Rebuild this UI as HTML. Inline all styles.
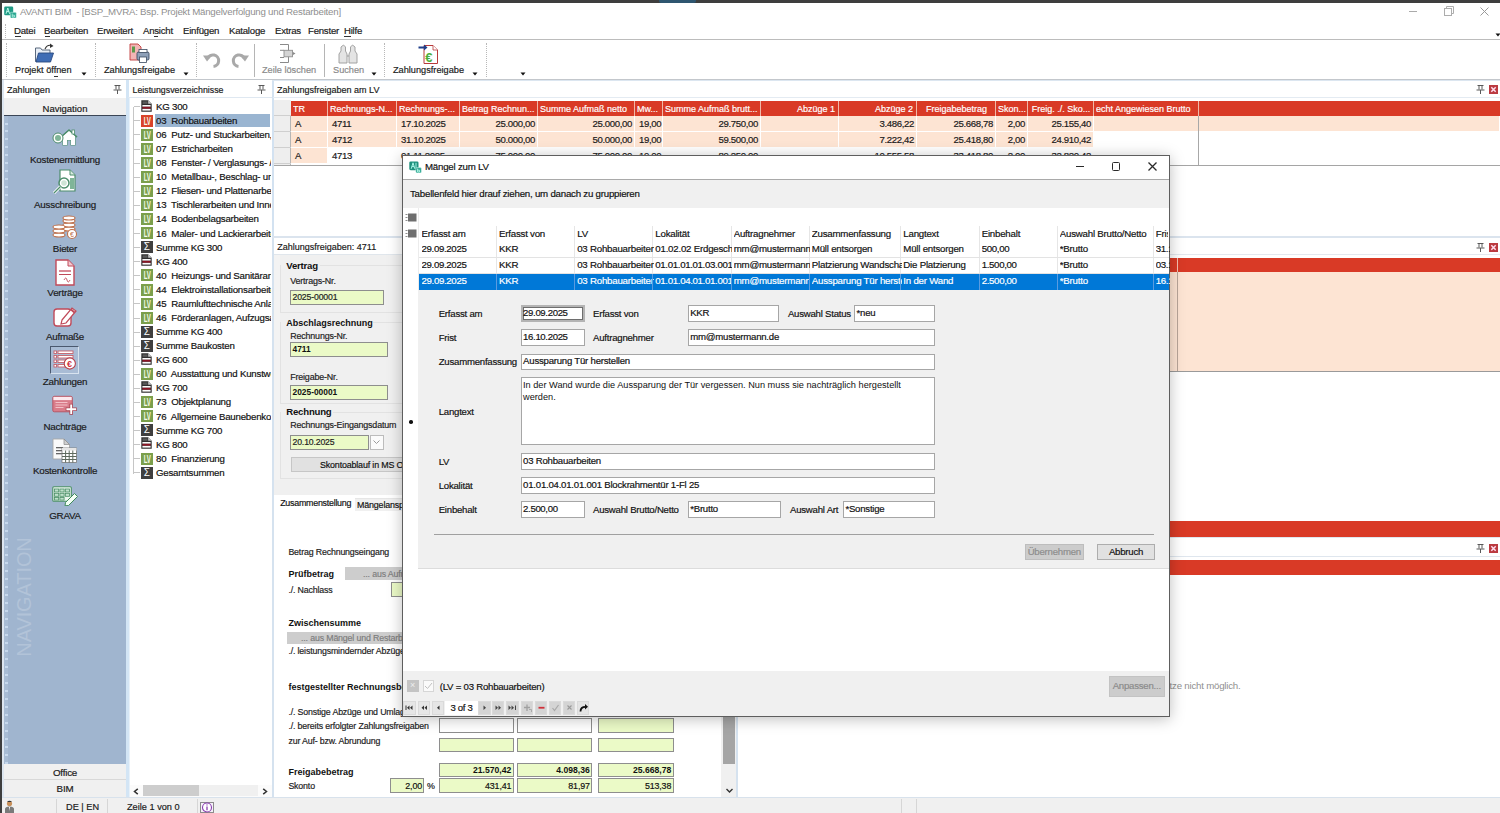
<!DOCTYPE html>
<html><head><meta charset="utf-8">
<style>
*{box-sizing:border-box;margin:0;padding:0}
html,body{width:1500px;height:813px;overflow:hidden;background:#fff}
body{position:relative;font-family:"Liberation Sans",sans-serif;font-size:9.2px;color:#1a1a1a}
.a{position:absolute}
.t{position:absolute;white-space:nowrap;line-height:12px;height:12px;-webkit-text-stroke-width:0.18px}
.n{letter-spacing:-0.35px}
.b{font-weight:bold;-webkit-text-stroke-width:0}
.hl{position:absolute;height:1px}
.vl{position:absolute;width:1px}
</style></head><body>
<!-- window frame -->
<div class="a" style="left:0;top:0;width:1500px;height:2.8px;background:#3e3e3e"></div>
<div class="a" style="left:0;top:0;width:1.9px;height:813px;background:#3e3e3e"></div>

<div class="a" style="left:659px;top:0;width:37px;height:3.3px;background:#2e5670;border-radius:0 0 2px 2px"></div>
<!-- title bar -->
<svg class="a" style="left:4px;top:5.5px" width="13" height="12.5" viewBox="0 0 13 12.5"><rect x="0.2" y="0.4" width="9" height="8.8" rx="1.3" fill="#1f9a85"/><rect x="6.3" y="6.3" width="6" height="5.8" rx="1" fill="#2aa58f" stroke="#e6fbf6" stroke-width="0.5"/><path d="M2 7.8 L3.8 2 L5.6 7.8 M2.7 5.6 H4.9" stroke="#c8fff2" stroke-width="0.9" fill="none"/><path d="M8.2 7.5 V11 H10.4 V9.2 H8.2" stroke="#c8fff2" stroke-width="0.7" fill="none"/></svg>
<div class="t" style="left:20px;top:6px;color:#8f8f8f;font-size:9.7px;-webkit-text-stroke-width:0;letter-spacing:-0.22px">AVANTI BIM&nbsp; - [BSP_MVRA: Bsp. Projekt Mängelverfolgung und Restarbeiten]</div>
<div class="a" style="left:1409px;top:11px;width:8px;height:1px;background:#aaa"></div>
<svg class="a" style="left:1443.5px;top:6px" width="10" height="10" viewBox="0 0 10 10"><rect x="0.5" y="2.5" width="7" height="7" fill="#fff" stroke="#adadad" stroke-width="1"/><path d="M2.5 2.5 V0.5 H9.5 V7.5 H7.5" fill="none" stroke="#adadad" stroke-width="1"/></svg>
<svg class="a" style="left:1479.5px;top:6.5px" width="9" height="9" viewBox="0 0 9 9"><path d="M0.5 0.5 L8.5 8.5 M8.5 0.5 L0.5 8.5" stroke="#999" stroke-width="1"/></svg>

<!-- menu -->
<div class="t" style="left:14px;top:25px;font-size:9.6px;letter-spacing:-0.22px">Datei</div>
<div class="t" style="left:44px;top:25px;font-size:9.6px;letter-spacing:-0.22px">Bearbeiten</div>
<div class="t" style="left:97px;top:25px;font-size:9.6px;letter-spacing:-0.22px">Erweitert</div>
<div class="t" style="left:143px;top:25px;font-size:9.6px;letter-spacing:-0.22px">Ansicht</div>
<div class="t" style="left:183px;top:25px;font-size:9.6px;letter-spacing:-0.22px">Einfügen</div>
<div class="t" style="left:229px;top:25px;font-size:9.6px;letter-spacing:-0.22px">Kataloge</div>
<div class="t" style="left:275px;top:25px;font-size:9.6px;letter-spacing:-0.22px">Extras</div>
<div class="t" style="left:308px;top:25px;font-size:9.6px;letter-spacing:-0.22px">Fenster</div>
<div class="t" style="left:344px;top:25px;font-size:9.6px;letter-spacing:-0.22px">Hilfe</div>
<div class="a" style="left:14.5px;top:36px;width:6.0px;height:0.8px;background:#333"></div><div class="a" style="left:44.5px;top:36px;width:5.8px;height:0.8px;background:#333"></div><div class="a" style="left:154.4px;top:35.6px;width:4px;height:0.8px;background:#333"></div><div class="a" style="left:344px;top:36px;width:6.5px;height:0.8px;background:#333"></div><div class="a" style="left:54px;top:75.5px;width:3.5px;height:0.8px;background:#333"></div>
<div class="hl" style="left:2px;top:39px;width:1498px;background:#bcbcbc"></div>

<!-- toolbar -->
<div class="t" style="left:15px;top:64px">Projekt öffnen</div>
<div class="t" style="left:104px;top:64px">Zahlungsfreigabe</div>
<div class="t" style="left:262px;top:64px;color:#8a8a8a">Zeile löschen</div>
<div class="t" style="left:333px;top:64px;color:#8a8a8a">Suchen</div>
<div class="t" style="left:393px;top:64px">Zahlungsfreigabe</div>
<div class="hl" style="left:2px;top:79px;width:1498px;background:#c3c7cc"></div>


<!-- ===== LEFT NAV ===== -->
<div class="a" style="left:2px;top:80px;width:2px;height:717px;background:#dde6f0"></div>
<div class="t" style="left:7px;top:84px;font-size:9.1px">Zahlungen</div>
<svg class="a" style="left:113px;top:84px" width="10" height="11" viewBox="0 0 10 11"><path d="M1.5 1.5H7.5M3 1.5V5.5M6 1.5V5.5M0.5 6H8.5M4.5 6V10" stroke="#5a5a5a" stroke-width="1" fill="none"/></svg>
<div class="a" style="left:4px;top:98px;width:122px;height:17px;background:#f0f0f0"></div>
<div class="t" style="left:4px;top:102.8px;width:122px;text-align:center;font-size:9.5px">Navigation</div>
<div class="a" style="left:4px;top:115px;width:122px;height:1.5px;background:#3b4656"></div>
<div class="a" style="left:4px;top:116px;width:122px;height:648px;background:#a0b5cf"></div>
<div class="a" style="left:4px;top:116px;width:4px;height:648px;background:#a8bcd4"></div><div class="a" style="left:4.5px;top:117px;width:3px;height:647px;background:repeating-linear-gradient(#a8bcd4 0 5.5px,#c6d8ec 5.5px 7.5px,#a8bcd4 7.5px 8px)"></div>
<div class="t" style="left:-36.2px;top:587px;font-size:20px;line-height:20px;height:20px;color:#b2c3d8;transform:rotate(-90deg);letter-spacing:-0.1px;-webkit-text-stroke-width:0">NAVIGATION</div>
<div class="t" style="left:4px;top:154.0px;width:122px;text-align:center;font-size:9.8px;letter-spacing:-0.22px">Kostenermittlung</div>
<div class="t" style="left:4px;top:198.5px;width:122px;text-align:center;font-size:9.8px;letter-spacing:-0.22px">Ausschreibung</div>
<div class="t" style="left:4px;top:242.5px;width:122px;text-align:center;font-size:9.8px;letter-spacing:-0.22px">Bieter</div>
<div class="t" style="left:4px;top:286.5px;width:122px;text-align:center;font-size:9.8px;letter-spacing:-0.22px">Verträge</div>
<div class="t" style="left:4px;top:331.0px;width:122px;text-align:center;font-size:9.8px;letter-spacing:-0.22px">Aufmaße</div>
<div class="t" style="left:4px;top:376.0px;width:122px;text-align:center;font-size:9.8px;letter-spacing:-0.22px">Zahlungen</div>
<div class="t" style="left:4px;top:420.5px;width:122px;text-align:center;font-size:9.8px;letter-spacing:-0.22px">Nachträge</div>
<div class="t" style="left:4px;top:464.5px;width:122px;text-align:center;font-size:9.8px;letter-spacing:-0.22px">Kostenkontrolle</div>
<div class="t" style="left:4px;top:509.5px;width:122px;text-align:center;font-size:9.8px;letter-spacing:-0.22px">GRAVA</div>

<svg class="a" style="left:52px;top:128px" width="26" height="18" viewBox="0 0 26 18">
 <path d="M9 9 L17 2 L25 9 M11 8 V17 H15 V12 H19 V17 H23 V8" fill="#fff" stroke="#5a9a78" stroke-width="1.2"/>
 <path d="M11 8 L17 3 L23 8 V17 H19 V12 H15 V17 H11Z" fill="#fff"/>
 <path d="M9 9 L17 2 L25 9" fill="none" stroke="#4d8d6c" stroke-width="1.3"/>
 <rect x="20" y="2" width="2.5" height="4" fill="#fff" stroke="#4d8d6c" stroke-width="0.8"/>
 <circle cx="6" cy="10" r="5" fill="#fff" stroke="#4d8d6c" stroke-width="1"/>
 <circle cx="6" cy="10" r="3" fill="#7fb598"/>
</svg>
<svg class="a" style="left:52px;top:169px" width="26" height="26" viewBox="0 0 26 26">
 <path d="M8 1 H18 L23 6 V22 H8 Z" fill="#fff" stroke="#4d8d6c" stroke-width="1.2"/>
 <path d="M18 1 V6 H23" fill="#d8eadf" stroke="#4d8d6c" stroke-width="1"/>
 <rect x="18" y="9" width="4" height="11" fill="#7fb598"/>
 <circle cx="12" cy="14" r="5" fill="#fff" stroke="#4d8d6c" stroke-width="1.5"/>
 <circle cx="12" cy="14" r="2.8" fill="#cfe4d6"/>
 <path d="M8.5 17.5 L2 24" stroke="#fff" stroke-width="3"/>
 <path d="M8.5 17.5 L2 24" stroke="#4d8d6c" stroke-width="1.2"/>
</svg>
<svg class="a" style="left:51px;top:215px" width="28" height="25" viewBox="0 0 28 25">
 <g fill="#fff" stroke="#c0704a" stroke-width="1.1">
 <ellipse cx="18" cy="14" rx="6" ry="2"/><ellipse cx="18" cy="10" rx="6" ry="2"/><ellipse cx="18" cy="6" rx="6" ry="2"/><ellipse cx="18" cy="3" rx="6" ry="2"/>
 <ellipse cx="8" cy="20" rx="6" ry="2"/><ellipse cx="8" cy="16" rx="6" ry="2"/><ellipse cx="8" cy="12" rx="6" ry="2"/>
 <circle cx="21" cy="19" r="4.5"/>
 </g>
 <text x="19" y="22" font-size="7" fill="#c0704a" font-family="Liberation Sans">€</text>
</svg>
<svg class="a" style="left:54px;top:259px" width="22" height="28" viewBox="0 0 22 28">
 <path d="M2 1 H14 L20 7 V26 H2 Z" fill="#fff" stroke="#c04a5a" stroke-width="1.4"/>
 <path d="M14 1 V7 H20" fill="#f3c8cf" stroke="#c04a5a" stroke-width="1"/>
 <rect x="5" y="11" width="12" height="2" fill="#d98a96"/>
 <rect x="5" y="15" width="12" height="1" fill="#c04a5a"/>
 <path d="M10 21 q2 -4 3 0 t3 0" fill="none" stroke="#c04a5a" stroke-width="0.9"/>
</svg>
<svg class="a" style="left:52px;top:305px" width="26" height="24" viewBox="0 0 26 24">
 <rect x="2" y="4" width="17" height="17" rx="3" fill="#fff" stroke="#c04a5a" stroke-width="1.4"/>
 <path d="M10 15 L20 3 L24 6 L14 18 L9 19 Z" fill="#fff" stroke="#c04a5a" stroke-width="1.2"/>
 <path d="M19 4.5 L22.5 7.5" stroke="#c04a5a" stroke-width="2"/>
</svg>
<div class="a" style="left:50.2px;top:346.2px;width:28.5px;height:27.5px;border:1.5px solid #4a586e;border-right-color:#d8e3ef;border-bottom-color:#d8e3ef;background:#a9bcd5"></div>
<svg class="a" style="left:52px;top:348px" width="25" height="24" viewBox="0 0 25 24">
 <g fill="#fff" stroke="#c8606a" stroke-width="0.9">
 <rect x="2" y="3" width="2.5" height="2.5"/><rect x="2" y="7.5" width="2.5" height="2.5"/><rect x="2" y="12" width="2.5" height="2.5"/><rect x="2" y="16.5" width="2.5" height="2.5"/>
 <rect x="6" y="3" width="15" height="2.5"/><rect x="6" y="7.5" width="15" height="2.5"/><rect x="6" y="12" width="10" height="2.5"/><rect x="6" y="16.5" width="9" height="2.5"/>
 </g>
 <circle cx="17.8" cy="15.5" r="5.6" fill="#fff" stroke="#b8404c" stroke-width="1.1"/>
 <text x="15" y="18.8" font-size="9" font-weight="bold" fill="#d0303a" font-family="Liberation Sans">€</text>
</svg>
<svg class="a" style="left:51.8px;top:395px" width="27" height="22" viewBox="0 0 27 22">
 <rect x="0.8" y="1.3" width="19.5" height="15.5" rx="1.5" fill="#d97c8a" stroke="#b5505f" stroke-width="0.9"/>
 <rect x="1.4" y="1.9" width="18.3" height="3.2" fill="#fde9ee"/>
 <rect x="3.5" y="7" width="12" height="1" fill="#f3c0c8"/><rect x="3.5" y="9.5" width="12" height="1" fill="#f3c0c8"/><rect x="3.5" y="12" width="8" height="1" fill="#f3c0c8"/>
 <path d="M19.2 8.7 V19.8 M13.7 14.2 H24.8" stroke="#a84453" stroke-width="3.6"/>
 <path d="M19.2 9.4 V19.1 M14.4 14.2 H24.1" stroke="#fff" stroke-width="1.9"/>
</svg>
<svg class="a" style="left:52px;top:437.5px" width="26" height="25" viewBox="0 0 26 25">
 <path d="M1 1 H12 L17.5 6.5 V21 H1 Z" fill="#fafafa" stroke="#a8a8a8" stroke-width="0.9"/>
 <path d="M12 1 V6.5 H17.5Z" fill="#d0d0d0" stroke="#8a8a8a" stroke-width="0.7"/>
 <rect x="4" y="9" width="7" height="1.3" fill="#666"/><rect x="4" y="12" width="7" height="1.3" fill="#666"/><rect x="4" y="15" width="7" height="1.3" fill="#666"/>
 <rect x="10" y="10" width="14.5" height="14.5" fill="#fff" stroke="#7a7a7a" stroke-width="0.8"/>
 <rect x="10" y="10" width="14.5" height="2.5" fill="#e6e6e6"/>
 <path d="M13.6 12.5 V24.5 M17.2 12.5 V24.5 M20.8 12.5 V24.5 M10 15.5 H24.5 M10 18.5 H24.5 M10 21.5 H24.5" stroke="#5e6a5e" stroke-width="1"/>
</svg>
<svg class="a" style="left:52px;top:486px" width="27" height="20" viewBox="0 0 27 20">
 <rect x="0.8" y="0.8" width="18.5" height="14.5" rx="1" fill="#eaf6ee" stroke="#4b8f66" stroke-width="1.1"/>
 <g fill="#bfe0cb" stroke="#4b8f66" stroke-width="0.8"><rect x="2.5" y="3" width="4.2" height="3"/><rect x="7.9" y="3" width="4.2" height="3"/><rect x="13.3" y="3" width="4.2" height="3"/><rect x="2.5" y="7.3" width="4.2" height="3"/><rect x="7.9" y="7.3" width="4.2" height="3"/><rect x="13.3" y="7.3" width="4.2" height="3"/><rect x="2.5" y="11.5" width="4.2" height="2.6"/><rect x="7.9" y="11.5" width="4.2" height="2.6"/></g>
 <path d="M13.5 16.5 L22.5 7.5 L25.5 10.5 L16.5 19.5 L13 19.8Z" fill="#f4fff6" stroke="#3f8a5a" stroke-width="1"/>
</svg>

<div class="a" style="left:4px;top:764px;width:122px;height:16px;background:#f0f0f0;border-bottom:1px solid #d8d8d8"></div>
<div class="t" style="left:4px;top:767px;width:122px;text-align:center;font-size:9.8px;letter-spacing:-0.22px">Office</div>
<div class="a" style="left:4px;top:780px;width:122px;height:17px;background:#f0f0f0"></div>
<div class="t" style="left:4px;top:783px;width:122px;text-align:center;font-size:9.8px;letter-spacing:-0.22px">BIM</div>
<div class="a" style="left:126px;top:80px;width:3px;height:717px;background:#d3e5f5"></div>


<!-- ===== LV TREE ===== -->
<div class="t" style="left:132.5px;top:84px;font-size:8.8px">Leistungsverzeichnisse</div>
<svg class="a" style="left:257px;top:84px" width="10" height="11" viewBox="0 0 10 11"><path d="M1.5 1.5H7.5M3 1.5V5.5M6 1.5V5.5M0.5 6H8.5M4.5 6V10" stroke="#5a5a5a" stroke-width="1" fill="none"/></svg>
<div class="a" style="left:129px;top:97px;width:1px;height:700px;background:#e8f1f9"></div>
<div class="a" style="left:271.5px;top:81px;width:2.5px;height:716px;background:#d3e2f1"></div>
<div class="a" style="left:128px;top:97px;width:144px;height:1px;background:#dfe8f1"></div>
<div class="a" style="left:155px;top:114px;width:115px;height:13px;background:#9ab5d1"></div>
<div class="a" style="left:133px;top:106.5px;width:1px;height:367px;background:#c6c6c6"></div>
<div class="a" style="left:129.5px;top:98px;width:141px;height:686px;overflow:hidden">
<div class="a" style="left:4px;top:8.30px;width:6.5px;height:1px;background:#c6c6c6"></div><svg class="a" style="left:11.6px;top:1.50px" width="11" height="12" viewBox="0 0 11 12"><path d="M0.3 0.3 H7.2 L10.7 3.8 V11.7 H0.3Z" fill="#2f2f2f"/><path d="M7.2 0.3 L10.7 3.8 H7.2Z" fill="#c8c8c8"/><rect x="1.4" y="5" width="8.2" height="1.7" fill="#fafafa"/><rect x="1.4" y="6.8" width="8.2" height="1.9" fill="#8c1424"/><rect x="1.4" y="8.9" width="8.2" height="1.7" fill="#fafafa"/><rect x="1.6" y="1.4" width="5" height="2.4" fill="#5a5a5a"/></svg><div class="t" style="left:26.5px;top:2.80px;font-size:9.7px;color:#111;letter-spacing:-0.22px">KG 300</div>
<div class="a" style="left:4px;top:22.38px;width:6.5px;height:1px;background:#c6c6c6"></div><div class="a" style="left:11.5px;top:16.58px;width:11.5px;height:12px;background:#d9432a;color:#fff;font-size:11px;line-height:12.5px;text-align:center;font-weight:bold;color:#f4fbe8"><span style="display:inline-block;transform:scaleX(0.55);letter-spacing:-0.6px">LV</span></div><div class="t" style="left:26.5px;top:16.88px;font-size:9.7px;color:#111;letter-spacing:-0.22px">03&nbsp; Rohbauarbeiten</div>
<div class="a" style="left:4px;top:36.46px;width:6.5px;height:1px;background:#c6c6c6"></div><div class="a" style="left:11.5px;top:30.66px;width:11.5px;height:12px;background:#7b9f4b;color:#fff;font-size:11px;line-height:12.5px;text-align:center;font-weight:bold;color:#f4fbe8"><span style="display:inline-block;transform:scaleX(0.55);letter-spacing:-0.6px">LV</span></div><div class="t" style="left:26.5px;top:30.96px;font-size:9.7px;color:#111;letter-spacing:-0.22px">06&nbsp; Putz- und Stuckarbeiten,</div>
<div class="a" style="left:4px;top:50.54px;width:6.5px;height:1px;background:#c6c6c6"></div><div class="a" style="left:11.5px;top:44.74px;width:11.5px;height:12px;background:#7b9f4b;color:#fff;font-size:11px;line-height:12.5px;text-align:center;font-weight:bold;color:#f4fbe8"><span style="display:inline-block;transform:scaleX(0.55);letter-spacing:-0.6px">LV</span></div><div class="t" style="left:26.5px;top:45.04px;font-size:9.7px;color:#111;letter-spacing:-0.22px">07&nbsp; Estricharbeiten</div>
<div class="a" style="left:4px;top:64.62px;width:6.5px;height:1px;background:#c6c6c6"></div><div class="a" style="left:11.5px;top:58.82px;width:11.5px;height:12px;background:#7b9f4b;color:#fff;font-size:11px;line-height:12.5px;text-align:center;font-weight:bold;color:#f4fbe8"><span style="display:inline-block;transform:scaleX(0.55);letter-spacing:-0.6px">LV</span></div><div class="t" style="left:26.5px;top:59.12px;font-size:9.7px;color:#111;letter-spacing:-0.22px">08&nbsp; Fenster- / Verglasungs- /</div>
<div class="a" style="left:4px;top:78.70px;width:6.5px;height:1px;background:#c6c6c6"></div><div class="a" style="left:11.5px;top:72.90px;width:11.5px;height:12px;background:#7b9f4b;color:#fff;font-size:11px;line-height:12.5px;text-align:center;font-weight:bold;color:#f4fbe8"><span style="display:inline-block;transform:scaleX(0.55);letter-spacing:-0.6px">LV</span></div><div class="t" style="left:26.5px;top:73.20px;font-size:9.7px;color:#111;letter-spacing:-0.22px">10&nbsp; Metallbau-, Beschlag- und</div>
<div class="a" style="left:4px;top:92.78px;width:6.5px;height:1px;background:#c6c6c6"></div><div class="a" style="left:11.5px;top:86.98px;width:11.5px;height:12px;background:#7b9f4b;color:#fff;font-size:11px;line-height:12.5px;text-align:center;font-weight:bold;color:#f4fbe8"><span style="display:inline-block;transform:scaleX(0.55);letter-spacing:-0.6px">LV</span></div><div class="t" style="left:26.5px;top:87.28px;font-size:9.7px;color:#111;letter-spacing:-0.22px">12&nbsp; Fliesen- und Plattenarbeiten</div>
<div class="a" style="left:4px;top:106.86px;width:6.5px;height:1px;background:#c6c6c6"></div><div class="a" style="left:11.5px;top:101.06px;width:11.5px;height:12px;background:#7b9f4b;color:#fff;font-size:11px;line-height:12.5px;text-align:center;font-weight:bold;color:#f4fbe8"><span style="display:inline-block;transform:scaleX(0.55);letter-spacing:-0.6px">LV</span></div><div class="t" style="left:26.5px;top:101.36px;font-size:9.7px;color:#111;letter-spacing:-0.22px">13&nbsp; Tischlerarbeiten und Innen</div>
<div class="a" style="left:4px;top:120.94px;width:6.5px;height:1px;background:#c6c6c6"></div><div class="a" style="left:11.5px;top:115.14px;width:11.5px;height:12px;background:#7b9f4b;color:#fff;font-size:11px;line-height:12.5px;text-align:center;font-weight:bold;color:#f4fbe8"><span style="display:inline-block;transform:scaleX(0.55);letter-spacing:-0.6px">LV</span></div><div class="t" style="left:26.5px;top:115.44px;font-size:9.7px;color:#111;letter-spacing:-0.22px">14&nbsp; Bodenbelagsarbeiten</div>
<div class="a" style="left:4px;top:135.02px;width:6.5px;height:1px;background:#c6c6c6"></div><div class="a" style="left:11.5px;top:129.22px;width:11.5px;height:12px;background:#7b9f4b;color:#fff;font-size:11px;line-height:12.5px;text-align:center;font-weight:bold;color:#f4fbe8"><span style="display:inline-block;transform:scaleX(0.55);letter-spacing:-0.6px">LV</span></div><div class="t" style="left:26.5px;top:129.52px;font-size:9.7px;color:#111;letter-spacing:-0.22px">16&nbsp; Maler- und Lackierarbeiten</div>
<div class="a" style="left:4px;top:149.10px;width:6.5px;height:1px;background:#c6c6c6"></div><div class="a" style="left:11.5px;top:143.30px;width:11.5px;height:12px;background:#3f3f3f;color:#fff;font-size:10px;line-height:12px;text-align:center">Σ</div><div class="t" style="left:26.5px;top:143.60px;font-size:9.7px;color:#111;letter-spacing:-0.22px">Summe KG 300</div>
<div class="a" style="left:4px;top:163.18px;width:6.5px;height:1px;background:#c6c6c6"></div><svg class="a" style="left:11.6px;top:156.38px" width="11" height="12" viewBox="0 0 11 12"><path d="M0.3 0.3 H7.2 L10.7 3.8 V11.7 H0.3Z" fill="#2f2f2f"/><path d="M7.2 0.3 L10.7 3.8 H7.2Z" fill="#c8c8c8"/><rect x="1.4" y="5" width="8.2" height="1.7" fill="#fafafa"/><rect x="1.4" y="6.8" width="8.2" height="1.9" fill="#8c1424"/><rect x="1.4" y="8.9" width="8.2" height="1.7" fill="#fafafa"/><rect x="1.6" y="1.4" width="5" height="2.4" fill="#5a5a5a"/></svg><div class="t" style="left:26.5px;top:157.68px;font-size:9.7px;color:#111;letter-spacing:-0.22px">KG 400</div>
<div class="a" style="left:4px;top:177.26px;width:6.5px;height:1px;background:#c6c6c6"></div><div class="a" style="left:11.5px;top:171.46px;width:11.5px;height:12px;background:#7b9f4b;color:#fff;font-size:11px;line-height:12.5px;text-align:center;font-weight:bold;color:#f4fbe8"><span style="display:inline-block;transform:scaleX(0.55);letter-spacing:-0.6px">LV</span></div><div class="t" style="left:26.5px;top:171.76px;font-size:9.7px;color:#111;letter-spacing:-0.22px">40&nbsp; Heizungs- und Sanitäranl</div>
<div class="a" style="left:4px;top:191.34px;width:6.5px;height:1px;background:#c6c6c6"></div><div class="a" style="left:11.5px;top:185.54px;width:11.5px;height:12px;background:#7b9f4b;color:#fff;font-size:11px;line-height:12.5px;text-align:center;font-weight:bold;color:#f4fbe8"><span style="display:inline-block;transform:scaleX(0.55);letter-spacing:-0.6px">LV</span></div><div class="t" style="left:26.5px;top:185.84px;font-size:9.7px;color:#111;letter-spacing:-0.22px">44&nbsp; Elektroinstallationsarbeiten</div>
<div class="a" style="left:4px;top:205.42px;width:6.5px;height:1px;background:#c6c6c6"></div><div class="a" style="left:11.5px;top:199.62px;width:11.5px;height:12px;background:#7b9f4b;color:#fff;font-size:11px;line-height:12.5px;text-align:center;font-weight:bold;color:#f4fbe8"><span style="display:inline-block;transform:scaleX(0.55);letter-spacing:-0.6px">LV</span></div><div class="t" style="left:26.5px;top:199.92px;font-size:9.7px;color:#111;letter-spacing:-0.22px">45&nbsp; Raumlufttechnische Anlagen</div>
<div class="a" style="left:4px;top:219.50px;width:6.5px;height:1px;background:#c6c6c6"></div><div class="a" style="left:11.5px;top:213.70px;width:11.5px;height:12px;background:#7b9f4b;color:#fff;font-size:11px;line-height:12.5px;text-align:center;font-weight:bold;color:#f4fbe8"><span style="display:inline-block;transform:scaleX(0.55);letter-spacing:-0.6px">LV</span></div><div class="t" style="left:26.5px;top:214.00px;font-size:9.7px;color:#111;letter-spacing:-0.22px">46&nbsp; Förderanlagen, Aufzugsanl</div>
<div class="a" style="left:4px;top:233.58px;width:6.5px;height:1px;background:#c6c6c6"></div><div class="a" style="left:11.5px;top:227.78px;width:11.5px;height:12px;background:#3f3f3f;color:#fff;font-size:10px;line-height:12px;text-align:center">Σ</div><div class="t" style="left:26.5px;top:228.08px;font-size:9.7px;color:#111;letter-spacing:-0.22px">Summe KG 400</div>
<div class="a" style="left:4px;top:247.66px;width:6.5px;height:1px;background:#c6c6c6"></div><div class="a" style="left:11.5px;top:241.86px;width:11.5px;height:12px;background:#3f3f3f;color:#fff;font-size:10px;line-height:12px;text-align:center">Σ</div><div class="t" style="left:26.5px;top:242.16px;font-size:9.7px;color:#111;letter-spacing:-0.22px">Summe Baukosten</div>
<div class="a" style="left:4px;top:261.74px;width:6.5px;height:1px;background:#c6c6c6"></div><svg class="a" style="left:11.6px;top:254.94px" width="11" height="12" viewBox="0 0 11 12"><path d="M0.3 0.3 H7.2 L10.7 3.8 V11.7 H0.3Z" fill="#2f2f2f"/><path d="M7.2 0.3 L10.7 3.8 H7.2Z" fill="#c8c8c8"/><rect x="1.4" y="5" width="8.2" height="1.7" fill="#fafafa"/><rect x="1.4" y="6.8" width="8.2" height="1.9" fill="#8c1424"/><rect x="1.4" y="8.9" width="8.2" height="1.7" fill="#fafafa"/><rect x="1.6" y="1.4" width="5" height="2.4" fill="#5a5a5a"/></svg><div class="t" style="left:26.5px;top:256.24px;font-size:9.7px;color:#111;letter-spacing:-0.22px">KG 600</div>
<div class="a" style="left:4px;top:275.82px;width:6.5px;height:1px;background:#c6c6c6"></div><div class="a" style="left:11.5px;top:270.02px;width:11.5px;height:12px;background:#7b9f4b;color:#fff;font-size:11px;line-height:12.5px;text-align:center;font-weight:bold;color:#f4fbe8"><span style="display:inline-block;transform:scaleX(0.55);letter-spacing:-0.6px">LV</span></div><div class="t" style="left:26.5px;top:270.32px;font-size:9.7px;color:#111;letter-spacing:-0.22px">60&nbsp; Ausstattung und Kunstwerke</div>
<div class="a" style="left:4px;top:289.90px;width:6.5px;height:1px;background:#c6c6c6"></div><svg class="a" style="left:11.6px;top:283.10px" width="11" height="12" viewBox="0 0 11 12"><path d="M0.3 0.3 H7.2 L10.7 3.8 V11.7 H0.3Z" fill="#2f2f2f"/><path d="M7.2 0.3 L10.7 3.8 H7.2Z" fill="#c8c8c8"/><rect x="1.4" y="5" width="8.2" height="1.7" fill="#fafafa"/><rect x="1.4" y="6.8" width="8.2" height="1.9" fill="#8c1424"/><rect x="1.4" y="8.9" width="8.2" height="1.7" fill="#fafafa"/><rect x="1.6" y="1.4" width="5" height="2.4" fill="#5a5a5a"/></svg><div class="t" style="left:26.5px;top:284.40px;font-size:9.7px;color:#111;letter-spacing:-0.22px">KG 700</div>
<div class="a" style="left:4px;top:303.98px;width:6.5px;height:1px;background:#c6c6c6"></div><div class="a" style="left:11.5px;top:298.18px;width:11.5px;height:12px;background:#7b9f4b;color:#fff;font-size:11px;line-height:12.5px;text-align:center;font-weight:bold;color:#f4fbe8"><span style="display:inline-block;transform:scaleX(0.55);letter-spacing:-0.6px">LV</span></div><div class="t" style="left:26.5px;top:298.48px;font-size:9.7px;color:#111;letter-spacing:-0.22px">73&nbsp; Objektplanung</div>
<div class="a" style="left:4px;top:318.06px;width:6.5px;height:1px;background:#c6c6c6"></div><div class="a" style="left:11.5px;top:312.26px;width:11.5px;height:12px;background:#7b9f4b;color:#fff;font-size:11px;line-height:12.5px;text-align:center;font-weight:bold;color:#f4fbe8"><span style="display:inline-block;transform:scaleX(0.55);letter-spacing:-0.6px">LV</span></div><div class="t" style="left:26.5px;top:312.56px;font-size:9.7px;color:#111;letter-spacing:-0.22px">76&nbsp; Allgemeine Baunebenkosten</div>
<div class="a" style="left:4px;top:332.14px;width:6.5px;height:1px;background:#c6c6c6"></div><div class="a" style="left:11.5px;top:326.34px;width:11.5px;height:12px;background:#3f3f3f;color:#fff;font-size:10px;line-height:12px;text-align:center">Σ</div><div class="t" style="left:26.5px;top:326.64px;font-size:9.7px;color:#111;letter-spacing:-0.22px">Summe KG 700</div>
<div class="a" style="left:4px;top:346.22px;width:6.5px;height:1px;background:#c6c6c6"></div><svg class="a" style="left:11.6px;top:339.42px" width="11" height="12" viewBox="0 0 11 12"><path d="M0.3 0.3 H7.2 L10.7 3.8 V11.7 H0.3Z" fill="#2f2f2f"/><path d="M7.2 0.3 L10.7 3.8 H7.2Z" fill="#c8c8c8"/><rect x="1.4" y="5" width="8.2" height="1.7" fill="#fafafa"/><rect x="1.4" y="6.8" width="8.2" height="1.9" fill="#8c1424"/><rect x="1.4" y="8.9" width="8.2" height="1.7" fill="#fafafa"/><rect x="1.6" y="1.4" width="5" height="2.4" fill="#5a5a5a"/></svg><div class="t" style="left:26.5px;top:340.72px;font-size:9.7px;color:#111;letter-spacing:-0.22px">KG 800</div>
<div class="a" style="left:4px;top:360.30px;width:6.5px;height:1px;background:#c6c6c6"></div><div class="a" style="left:11.5px;top:354.50px;width:11.5px;height:12px;background:#7b9f4b;color:#fff;font-size:11px;line-height:12.5px;text-align:center;font-weight:bold;color:#f4fbe8"><span style="display:inline-block;transform:scaleX(0.55);letter-spacing:-0.6px">LV</span></div><div class="t" style="left:26.5px;top:354.80px;font-size:9.7px;color:#111;letter-spacing:-0.22px">80&nbsp; Finanzierung</div>
<div class="a" style="left:4px;top:374.38px;width:6.5px;height:1px;background:#c6c6c6"></div><div class="a" style="left:11.5px;top:368.58px;width:11.5px;height:12px;background:#3f3f3f;color:#fff;font-size:10px;line-height:12px;text-align:center">Σ</div><div class="t" style="left:26.5px;top:368.88px;font-size:9.7px;color:#111;letter-spacing:-0.22px">Gesamtsummen</div>
</div>
<div class="a" style="left:129.5px;top:785px;width:142px;height:12px;background:#fbfbfb"></div><div class="a" style="left:143px;top:785px;width:115px;height:11px;background:#f0f0f0"></div>
<div class="a" style="left:143px;top:785px;width:56px;height:11px;background:#cdcdcd"></div>
<svg class="a" style="left:133px;top:787.5px" width="6" height="7" viewBox="0 0 6 7"><path d="M4.8 0.8 L1.5 3.5 L4.8 6.2" stroke="#333" stroke-width="1.5" fill="none"/></svg>
<svg class="a" style="left:262px;top:787.5px" width="6" height="7" viewBox="0 0 6 7"><path d="M1.2 0.8 L4.5 3.5 L1.2 6.2" stroke="#333" stroke-width="1.5" fill="none"/></svg>


<!-- ===== MAIN GRID ===== -->
<div class="a" style="left:272px;top:80px;width:1228px;height:1px;background:#dce6f0"></div>
<div class="t" style="left:277px;top:84px;font-size:9px">Zahlungsfreigaben am LV</div>
<svg class="a" style="left:1476px;top:84px" width="10" height="11" viewBox="0 0 10 11"><path d="M1.5 1.5H7.5M3 1.5V5.5M6 1.5V5.5M0.5 6H8.5M4.5 6V10" stroke="#5a5a5a" stroke-width="1" fill="none"/></svg>
<div class="a" style="left:1489px;top:85px;width:9px;height:9.3px;background:#bb3a40"><svg style="position:absolute;left:0;top:0" width="9" height="9" viewBox="0 0 9 9"><path d="M2.3 2.3L6.7 6.7M6.7 2.3L2.3 6.7" stroke="#fde" stroke-width="1.5"/></svg></div>
<div class="a" style="left:273px;top:97px;width:1227px;height:1px;background:#e4ebf2"></div>
<div class="a" style="left:274px;top:100px;width:17px;height:65px;background:#eeeeee"></div><div class="a" style="left:290px;top:116px;width:1px;height:49px;background:#b5b5b5"></div>
<div class="a" style="left:274px;top:115px;width:17px;height:1px;background:#cfcfcf"></div><div class="a" style="left:274px;top:131px;width:17px;height:1px;background:#cfcfcf"></div><div class="a" style="left:274px;top:147px;width:17px;height:1px;background:#cfcfcf"></div><div class="a" style="left:274px;top:163px;width:17px;height:1px;background:#cfcfcf"></div><div class="a" style="left:291px;top:100.7px;width:1209px;height:15.1px;background:#d93a26"></div>
<div class="t" style="left:293px;top:102.8px;width:33px;overflow:hidden;color:#fff;font-size:9px">TR</div><div class="a" style="left:327px;top:100.7px;width:1.3px;height:15px;background:#f0b8a8"></div><div class="t" style="left:330px;top:102.8px;width:65px;overflow:hidden;color:#fff;font-size:9px">Rechnungs-N...</div><div class="a" style="left:396px;top:100.7px;width:1.3px;height:15px;background:#f0b8a8"></div><div class="t" style="left:399px;top:102.8px;width:59px;overflow:hidden;color:#fff;font-size:9px">Rechnungs-...</div><div class="a" style="left:459px;top:100.7px;width:1.3px;height:15px;background:#f0b8a8"></div><div class="t" style="left:462px;top:102.8px;width:74px;overflow:hidden;color:#fff;font-size:9px">Betrag Rechnun...</div><div class="a" style="left:537px;top:100.7px;width:1.3px;height:15px;background:#f0b8a8"></div><div class="t" style="left:540px;top:102.8px;width:93px;overflow:hidden;color:#fff;font-size:9px">Summe Aufmaß netto</div><div class="a" style="left:634px;top:100.7px;width:1.3px;height:15px;background:#f0b8a8"></div><div class="t" style="left:637px;top:102.8px;width:24px;overflow:hidden;color:#fff;font-size:9px">Mw...</div><div class="a" style="left:662px;top:100.7px;width:1.3px;height:15px;background:#f0b8a8"></div><div class="t" style="left:665px;top:102.8px;width:94px;overflow:hidden;color:#fff;font-size:9px">Summe Aufmaß brutt...</div><div class="a" style="left:760px;top:100.7px;width:1.3px;height:15px;background:#f0b8a8"></div><div class="t" style="left:763px;top:102.8px;width:72px;text-align:right;color:#fff;font-size:9px">Abzüge 1</div><div class="a" style="left:838px;top:100.7px;width:1.3px;height:15px;background:#f0b8a8"></div><div class="t" style="left:841px;top:102.8px;width:72px;text-align:right;color:#fff;font-size:9px">Abzüge 2</div><div class="a" style="left:916px;top:100.7px;width:1.3px;height:15px;background:#f0b8a8"></div><div class="t" style="left:917px;top:102.8px;width:79px;text-align:center;color:#fff;font-size:9px">Freigabebetrag</div><div class="a" style="left:995px;top:100.7px;width:1.3px;height:15px;background:#f0b8a8"></div><div class="t" style="left:998px;top:102.8px;width:28px;overflow:hidden;color:#fff;font-size:9px">Skon...</div><div class="a" style="left:1027px;top:100.7px;width:1.3px;height:15px;background:#f0b8a8"></div><div class="t" style="left:1028px;top:102.8px;width:66px;text-align:center;color:#fff;font-size:9px">Freig. ./. Sko...</div><div class="a" style="left:1093px;top:100.7px;width:1.3px;height:15px;background:#f0b8a8"></div><div class="t" style="left:1096px;top:102.8px;width:101px;overflow:hidden;color:#fff;font-size:9px">echt Angewiesen Brutto</div><div class="a" style="left:1198px;top:100.7px;width:1.3px;height:15px;background:#f0b8a8"></div>
<div class="a" style="left:291px;top:116px;width:36px;height:15px;background:#fde4d3"></div><div class="t" style="left:295px;top:118px;font-size:9.6px;letter-spacing:-0.22px">A</div><div class="a" style="left:328px;top:116px;width:68px;height:15px;background:#fde4d3"></div><div class="t n" style="left:332px;top:118px;font-size:9.6px">4711</div><div class="a" style="left:397px;top:116px;width:62px;height:15px;background:#fde4d3"></div><div class="t n" style="left:401px;top:118px;font-size:9.6px">17.10.2025</div><div class="a" style="left:460px;top:116px;width:77px;height:15px;background:#fde4d3"></div><div class="t n" style="left:460px;top:118px;width:75px;text-align:right;font-size:9.6px">25.000,00</div><div class="a" style="left:538px;top:116px;width:96px;height:15px;background:#fde4d3"></div><div class="t n" style="left:538px;top:118px;width:94px;text-align:right;font-size:9.6px">25.000,00</div><div class="a" style="left:635px;top:116px;width:27px;height:15px;background:#fde4d3"></div><div class="t n" style="left:639px;top:118px;font-size:9.6px">19,00</div><div class="a" style="left:663px;top:116px;width:97px;height:15px;background:#fde4d3"></div><div class="t n" style="left:663px;top:118px;width:95px;text-align:right;font-size:9.6px">29.750,00</div><div class="a" style="left:761px;top:116px;width:77px;height:15px;background:#fde4d3"></div><div class="a" style="left:839px;top:116px;width:77px;height:15px;background:#fde4d3"></div><div class="t n" style="left:839px;top:118px;width:75px;text-align:right;font-size:9.6px">3.486,22</div><div class="a" style="left:917px;top:116px;width:78px;height:15px;background:#fde4d3"></div><div class="t n" style="left:917px;top:118px;width:76px;text-align:right;font-size:9.6px">25.668,78</div><div class="a" style="left:996px;top:116px;width:31px;height:15px;background:#fde4d3"></div><div class="t n" style="left:996px;top:118px;width:29px;text-align:right;font-size:9.6px">2,00</div><div class="a" style="left:1028px;top:116px;width:65px;height:15px;background:#fde4d3"></div><div class="t n" style="left:1028px;top:118px;width:63px;text-align:right;font-size:9.6px">25.155,40</div><div class="a" style="left:1094px;top:116px;width:104px;height:15px;background:#fde4d3"></div><div class="a" style="left:1199px;top:116px;width:300px;height:15px;background:#fde4d3"></div>
<div class="a" style="left:291px;top:132px;width:36px;height:15px;background:#fde4d3"></div><div class="t" style="left:295px;top:134px;font-size:9.6px;letter-spacing:-0.22px">A</div><div class="a" style="left:328px;top:132px;width:68px;height:15px;background:#fde4d3"></div><div class="t n" style="left:332px;top:134px;font-size:9.6px">4712</div><div class="a" style="left:397px;top:132px;width:62px;height:15px;background:#fde4d3"></div><div class="t n" style="left:401px;top:134px;font-size:9.6px">31.10.2025</div><div class="a" style="left:460px;top:132px;width:77px;height:15px;background:#fde4d3"></div><div class="t n" style="left:460px;top:134px;width:75px;text-align:right;font-size:9.6px">50.000,00</div><div class="a" style="left:538px;top:132px;width:96px;height:15px;background:#fde4d3"></div><div class="t n" style="left:538px;top:134px;width:94px;text-align:right;font-size:9.6px">50.000,00</div><div class="a" style="left:635px;top:132px;width:27px;height:15px;background:#fde4d3"></div><div class="t n" style="left:639px;top:134px;font-size:9.6px">19,00</div><div class="a" style="left:663px;top:132px;width:97px;height:15px;background:#fde4d3"></div><div class="t n" style="left:663px;top:134px;width:95px;text-align:right;font-size:9.6px">59.500,00</div><div class="a" style="left:761px;top:132px;width:77px;height:15px;background:#fde4d3"></div><div class="a" style="left:839px;top:132px;width:77px;height:15px;background:#fde4d3"></div><div class="t n" style="left:839px;top:134px;width:75px;text-align:right;font-size:9.6px">7.222,42</div><div class="a" style="left:917px;top:132px;width:78px;height:15px;background:#fde4d3"></div><div class="t n" style="left:917px;top:134px;width:76px;text-align:right;font-size:9.6px">25.418,80</div><div class="a" style="left:996px;top:132px;width:31px;height:15px;background:#fde4d3"></div><div class="t n" style="left:996px;top:134px;width:29px;text-align:right;font-size:9.6px">2,00</div><div class="a" style="left:1028px;top:132px;width:65px;height:15px;background:#fde4d3"></div><div class="t n" style="left:1028px;top:134px;width:63px;text-align:right;font-size:9.6px">24.910,42</div>
<div class="a" style="left:291px;top:148px;width:36px;height:15px;background:#fde4d3"></div><div class="t" style="left:295px;top:150px;font-size:9.6px;letter-spacing:-0.22px">A</div><div class="t n" style="left:332px;top:150px;font-size:9.6px">4713</div><div class="t n" style="left:401px;top:150px;font-size:9.6px">01.11.2025</div><div class="t n" style="left:460px;top:150px;width:75px;text-align:right;font-size:9.6px">75.000,00</div><div class="t n" style="left:538px;top:150px;width:94px;text-align:right;font-size:9.6px">75.000,00</div><div class="t n" style="left:639px;top:150px;font-size:9.6px">19,00</div><div class="t n" style="left:663px;top:150px;width:95px;text-align:right;font-size:9.6px">89.250,00</div><div class="t n" style="left:839px;top:150px;width:75px;text-align:right;font-size:9.6px">10.555,58</div><div class="t n" style="left:917px;top:150px;width:76px;text-align:right;font-size:9.6px">33.418,80</div><div class="t n" style="left:996px;top:150px;width:29px;text-align:right;font-size:9.6px">2,00</div><div class="t n" style="left:1028px;top:150px;width:63px;text-align:right;font-size:9.6px">32.820,42</div>
<div class="a" style="left:1198px;top:116px;width:1px;height:49px;background:#a8a8a8"></div>
<div class="a" style="left:274px;top:164.5px;width:1226px;height:1.2px;background:#a5a5a5"></div>
<div class="a" style="left:272px;top:236px;width:1228px;height:2px;background:#dbe4ee"></div>

<!-- right panel 2 -->
<svg class="a" style="left:1476px;top:242px" width="10" height="11" viewBox="0 0 10 11"><path d="M1.5 1.5H7.5M3 1.5V5.5M6 1.5V5.5M0.5 6H8.5M4.5 6V10" stroke="#5a5a5a" stroke-width="1" fill="none"/></svg>
<div class="a" style="left:1489px;top:243px;width:9px;height:9.3px;background:#bb3a40"><svg style="position:absolute;left:0;top:0" width="9" height="9" viewBox="0 0 9 9"><path d="M2.3 2.3L6.7 6.7M6.7 2.3L2.3 6.7" stroke="#fde" stroke-width="1.5"/></svg></div>
<div class="a" style="left:738px;top:254px;width:762px;height:1px;background:#e3e8ee"></div>
<div class="a" style="left:738px;top:257.5px;width:762px;height:14.5px;background:#d93a26"></div>
<div class="a" style="left:738px;top:272px;width:762px;height:99px;background:#fde4d3"></div>
<div class="a" style="left:1177px;top:258px;width:1px;height:113px;background:#f5c0b0"></div>
<div class="a" style="left:1177px;top:272px;width:1px;height:99px;background:#b9a59a"></div>
<div class="a" style="left:738px;top:371px;width:762px;height:1px;background:#9a9a9a"></div>
<div class="a" style="left:738px;top:520.5px;width:762px;height:16.5px;background:#d93a26"></div>
<div class="a" style="left:738px;top:537px;width:762px;height:1px;background:#dfe6ee"></div>
<svg class="a" style="left:1476px;top:543px" width="10" height="11" viewBox="0 0 10 11"><path d="M1.5 1.5H7.5M3 1.5V5.5M6 1.5V5.5M0.5 6H8.5M4.5 6V10" stroke="#5a5a5a" stroke-width="1" fill="none"/></svg>
<div class="a" style="left:1489px;top:544px;width:9px;height:9.3px;background:#bb3a40"><svg style="position:absolute;left:0;top:0" width="9" height="9" viewBox="0 0 9 9"><path d="M2.3 2.3L6.7 6.7M6.7 2.3L2.3 6.7" stroke="#fde" stroke-width="1.5"/></svg></div>
<div class="a" style="left:738px;top:556px;width:762px;height:1px;background:#dfe6ee"></div>
<div class="a" style="left:738px;top:560px;width:762px;height:14.5px;background:#d93a26"></div>
<div class="t" style="left:1074px;top:680px;width:166.5px;text-align:right;font-size:9.7px;color:#909090;-webkit-text-stroke-width:0;letter-spacing:-0.22px">Eingabe ohne Datensätze nicht möglich.</div>


<!-- ===== PANEL 4711 ===== -->
<div class="a" style="left:272px;top:238px;width:2px;height:559px;background:#d5e2ef"></div>
<div class="a" style="left:735.5px;top:238px;width:2px;height:559px;background:#d5e2ef"></div>
<div class="t" style="left:277.3px;top:241px;font-size:9px">Zahlungsfreigaben: 4711</div>
<div class="a" style="left:274px;top:254px;width:462px;height:1px;background:#e0e6ec"></div>
<div class="a" style="left:274px;top:255px;width:462px;height:240px;background:#f3f3f3"></div><div class="a" style="left:280px;top:255px;width:456px;height:240px;background:#f0f0f0"></div>
<div class="a" style="left:280px;top:265px;width:1px;height:47px;background:#e2e2e2"></div>
<div class="a" style="left:320px;top:265px;width:416px;height:1px;background:#e2e2e2"></div>
<div class="a" style="left:280px;top:312px;width:456px;height:1px;background:#e2e2e2"></div>
<div class="a" style="left:280px;top:322px;width:1px;height:81px;background:#e2e2e2"></div>
<div class="a" style="left:373px;top:322px;width:363px;height:1px;background:#e2e2e2"></div>
<div class="a" style="left:280px;top:403px;width:456px;height:1px;background:#e2e2e2"></div>
<div class="a" style="left:280px;top:412px;width:1px;height:66px;background:#e2e2e2"></div>
<div class="a" style="left:333px;top:412px;width:403px;height:1px;background:#e2e2e2"></div>
<div class="a" style="left:280px;top:478px;width:456px;height:1px;background:#e2e2e2"></div>

<div class="t b" style="left:286.3px;top:260px;font-size:9.6px;color:#111;letter-spacing:-0.22px">Vertrag</div>
<div class="t" style="left:290.2px;top:275px;font-size:8.9px;color:#222;letter-spacing:-0.15px">Vertrags-Nr.</div>
<div class="a" style="left:290px;top:290px;width:94px;height:15px;background:#ebfac7;border:1px solid #8e8e8e"></div>
<div class="t" style="left:292.5px;top:291px;font-size:8.7px;color:#222;letter-spacing:-0.15px">2025-00001</div>

<div class="t b" style="left:286.3px;top:316.5px;font-size:9px;color:#111">Abschlagsrechnung</div>
<div class="t" style="left:290.2px;top:329.5px;font-size:8.9px;color:#222;letter-spacing:-0.15px">Rechnungs-Nr.</div>
<div class="a" style="left:290px;top:342px;width:97.5px;height:14.5px;background:#ebfac7;border:1px solid #8e8e8e"></div>
<div class="t b" style="left:292.5px;top:343px;font-size:8.4px;color:#111">4711</div>
<div class="t" style="left:290.2px;top:371px;font-size:8.9px;color:#222;letter-spacing:-0.15px">Freigabe-Nr.</div>
<div class="a" style="left:290px;top:385px;width:97.5px;height:14.5px;background:#ebfac7;border:1px solid #8e8e8e"></div>
<div class="t b" style="left:292.5px;top:386px;font-size:8.4px;color:#111">2025-00001</div>

<div class="t b" style="left:286.3px;top:406px;font-size:9.6px;color:#111;letter-spacing:-0.22px">Rechnung</div>
<div class="t" style="left:290.2px;top:419.3px;font-size:8.9px;color:#222;letter-spacing:-0.15px">Rechnungs-Eingangsdatum</div>
<div class="a" style="left:290px;top:435px;width:78.5px;height:14.5px;background:#ebfac7;border:1px solid #8e8e8e"></div>
<div class="t" style="left:292.5px;top:436px;font-size:8.7px;color:#222;letter-spacing:-0.15px">20.10.2025</div>
<div class="a" style="left:369.5px;top:435px;width:14px;height:14.5px;background:#fbfbfb;border:1px solid #bcbcbc"></div>
<svg class="a" style="left:372px;top:439px" width="9" height="6" viewBox="0 0 9 6"><path d="M1.5 1.5 L4.5 4.5 L7.5 1.5" stroke="#9a9a9a" fill="none" stroke-width="1"/></svg>
<div class="a" style="left:290.5px;top:457px;width:120px;height:15px;background:#e1e1e1;border:1px solid #c6c6c6"></div>
<div class="t" style="left:320px;top:458.5px;font-size:8.9px;color:#111;letter-spacing:-0.15px">Skontoablauf in MS Outlook</div>

<!-- tabs -->
<div class="a" style="left:274px;top:495px;width:462px;height:302px;background:#fff"></div><div class="a" style="left:274px;top:480px;width:462px;height:15px;background:#f0f0f0"></div>

<div class="a" style="left:274.5px;top:494.8px;width:80.3px;height:17px;background:#fff"></div>
<div class="t" style="left:280.2px;top:497px;font-size:8.9px;letter-spacing:-0.25px;color:#111">Zusammenstellung</div>
<div class="a" style="left:354.8px;top:497.5px;width:60px;height:13px;background:#f0f0f0;border-top:1px solid #e6e6e6"></div>
<div class="t" style="left:357px;top:498.5px;font-size:8.9px;color:#111;letter-spacing:-0.15px">Mängelansprüche</div>

<div class="t" style="left:288.4px;top:545.7px;font-size:8.8px;color:#222;letter-spacing:-0.15px">Betrag Rechnungseingang</div>
<div class="t b" style="left:288.4px;top:568.3px;font-size:9px;color:#111">Prüfbetrag</div>
<div class="a" style="left:345px;top:567px;width:80px;height:13px;background:#cdcdcd"></div>
<div class="t" style="left:363px;top:568px;font-size:8.8px;color:#7d7d7d;letter-spacing:-0.15px">... aus Aufmaß</div>
<div class="t" style="left:288.4px;top:583.8px;font-size:8.8px;color:#222;letter-spacing:-0.15px">./. Nachlass</div>
<div class="a" style="left:391px;top:582px;width:60px;height:14.5px;background:#ebfac7;border:1px solid #8e8e8e"></div>
<div class="t b" style="left:288.4px;top:617.4px;font-size:9px;color:#111">Zwischensumme</div>
<div class="a" style="left:287px;top:631.5px;width:140px;height:12px;background:#cdcdcd"></div>
<div class="t" style="left:301px;top:631.5px;font-size:8.8px;color:#7d7d7d;letter-spacing:-0.15px">... aus Mängel und Restarbeiten</div>
<div class="t" style="left:288.4px;top:645.3px;font-size:8.8px;color:#222;letter-spacing:-0.15px">./. leistungsmindernder Abzüge</div>
<div class="t b" style="left:288.4px;top:681px;font-size:9px;color:#111">festgestellter Rechnungsbetrag</div>
<div class="t" style="left:288.4px;top:705.6px;font-size:8.8px;color:#222;letter-spacing:-0.15px">./. Sonstige Abzüge und Umlagen</div>
<div class="t" style="left:288.4px;top:720px;font-size:8.8px;color:#222;letter-spacing:-0.15px">./. bereits erfolgter Zahlungsfreigaben</div>
<div class="t" style="left:288.4px;top:735px;font-size:8.8px;color:#222;letter-spacing:-0.15px">zur Auf- bzw. Abrundung</div>
<div class="t b" style="left:288.4px;top:765.8px;font-size:9px;color:#111">Freigabebetrag</div>
<div class="t" style="left:288.4px;top:780px;font-size:8.8px;color:#222;letter-spacing:-0.15px">Skonto</div>
<div class="a" style="left:438.5px;top:717.5px;width:75.3px;height:15px;background:#fff;border:1px solid #8e8e8e"></div><div class="a" style="left:516.8px;top:717.5px;width:75.5px;height:15px;background:#fff;border:1px solid #8e8e8e"></div><div class="a" style="left:598px;top:717.5px;width:75.7px;height:15px;background:#ebfac7;border:1px solid #8e8e8e"></div>
<div class="a" style="left:438.5px;top:737.5px;width:75.3px;height:14.5px;background:#ebfac7;border:1px solid #8e8e8e"></div><div class="a" style="left:516.8px;top:737.5px;width:75.5px;height:14.5px;background:#ebfac7;border:1px solid #8e8e8e"></div><div class="a" style="left:598px;top:737.5px;width:75.7px;height:14.5px;background:#ebfac7;border:1px solid #8e8e8e"></div>
<div class="a" style="left:438.5px;top:762.5px;width:75.3px;height:14.5px;background:#ebfac7;border:1px solid #8e8e8e"></div><div class="t b" style="left:438.5px;top:764.0px;width:72.8px;text-align:right;font-size:8.6px;color:#111">21.570,42</div><div class="a" style="left:516.8px;top:762.5px;width:75.5px;height:14.5px;background:#ebfac7;border:1px solid #8e8e8e"></div><div class="t b" style="left:516.8px;top:764.0px;width:73.0px;text-align:right;font-size:8.6px;color:#111">4.098,36</div><div class="a" style="left:598px;top:762.5px;width:75.7px;height:14.5px;background:#ebfac7;border:1px solid #8e8e8e"></div><div class="t b" style="left:598px;top:764.0px;width:73.2px;text-align:right;font-size:8.6px;color:#111">25.668,78</div>
<div class="a" style="left:438.5px;top:778px;width:75.3px;height:14.5px;background:#ebfac7;border:1px solid #8e8e8e"></div><div class="t" style="left:438.5px;top:779.5px;width:72.8px;text-align:right;font-size:8.9px;color:#111;letter-spacing:-0.15px">431,41</div><div class="a" style="left:516.8px;top:778px;width:75.5px;height:14.5px;background:#ebfac7;border:1px solid #8e8e8e"></div><div class="t" style="left:516.8px;top:779.5px;width:73.0px;text-align:right;font-size:8.9px;color:#111;letter-spacing:-0.15px">81,97</div><div class="a" style="left:598px;top:778px;width:75.7px;height:14.5px;background:#ebfac7;border:1px solid #8e8e8e"></div><div class="t" style="left:598px;top:779.5px;width:73.2px;text-align:right;font-size:8.9px;color:#111;letter-spacing:-0.15px">513,38</div>
<div class="a" style="left:390px;top:778px;width:34px;height:14.5px;background:#ebfac7;border:1px solid #8e8e8e"></div>
<div class="t" style="left:390px;top:779.5px;width:32px;text-align:right;font-size:8.9px;color:#111;letter-spacing:-0.15px">2,00</div>
<div class="t" style="left:427px;top:779.5px;font-size:8.9px;color:#111;letter-spacing:-0.15px">%</div>
<div class="a" style="left:720.5px;top:511px;width:15.5px;height:286px;background:#f0f0f0"></div>
<div class="a" style="left:723px;top:511px;width:12px;height:253px;background:#a5a5a5"></div>
<svg class="a" style="left:725px;top:788px" width="9" height="6" viewBox="0 0 9 6"><path d="M1.5 1 L4.5 4 L7.5 1" stroke="#333" fill="none" stroke-width="1.4"/></svg>


<!-- ===== DIALOG ===== -->
<div class="a" style="left:402px;top:154.5px;width:768px;height:562px;background:#fff;border:1px solid #5e5e5e;box-shadow:0 2px 14px rgba(0,0,0,0.26)"></div>
<svg class="a" style="left:408.8px;top:160.5px" width="13" height="12.5" viewBox="0 0 13 12.5"><rect x="0.3" y="0.4" width="9.2" height="8.8" rx="1.4" fill="#1d917d"/><path d="M2.2 7.8 L4 1.8 L5.8 7.8 M2.9 5.6 H5.1 M7 1.8 V7.5" stroke="#b8fff0" stroke-width="0.9" fill="none"/><rect x="6.8" y="6.6" width="5.6" height="5.4" rx="1.2" fill="#2aa58f" stroke="#e6fbf6" stroke-width="0.5"/><path d="M8.6 7.6 V11 H10.6 V9.2 H8.6" stroke="#c8fff2" stroke-width="0.8" fill="none"/></svg>
<div class="t" style="left:425px;top:161px;font-size:9.7px;color:#111;letter-spacing:-0.22px">Mängel zum LV</div>
<div class="a" style="left:1076.4px;top:166px;width:8px;height:1.4px;background:#2a2a2a"></div>
<div class="a" style="left:1111.6px;top:162px;width:8.5px;height:8.5px;border:1.4px solid #2a2a2a;border-radius:1.5px"></div>
<svg class="a" style="left:1147.5px;top:162.3px" width="9" height="9" viewBox="0 0 9 9"><path d="M0.5 0.5 L8.5 8.5 M8.5 0.5 L0.5 8.5" stroke="#2a2a2a" stroke-width="1.3"/></svg>
<div class="a" style="left:403px;top:179px;width:766px;height:1px;background:#a9a9a9"></div>
<div class="a" style="left:403px;top:180px;width:766px;height:28px;background:#f0f0f0"></div>
<div class="t" style="left:410px;top:188px;font-size:9.7px;color:#111;letter-spacing:-0.22px">Tabellenfeld hier drauf ziehen, um danach zu gruppieren</div>
<svg class="a" style="left:405px;top:213px" width="12" height="9" viewBox="0 0 12 9"><rect x="3" y="0.5" width="8.5" height="8" fill="#6e6e6e"/><path d="M0.5 1.5h2M0.5 4.5h2M0.5 7.5h2" stroke="#6e6e6e" stroke-width="0.8"/></svg>
<svg class="a" style="left:405px;top:229px" width="12" height="9" viewBox="0 0 12 9"><rect x="3" y="0.5" width="8.5" height="8" fill="#6e6e6e"/><path d="M0.5 1.5h2M0.5 4.5h2M0.5 7.5h2" stroke="#6e6e6e" stroke-width="0.8"/></svg>
<div class="a" style="left:418px;top:208px;width:1px;height:82px;background:#ececec"></div>
<div class="t" style="left:421.5px;top:227.5px;width:74.5px;overflow:hidden;font-size:9.7px;color:#111;letter-spacing:-0.22px">Erfasst am</div><div class="t" style="left:499.0px;top:227.5px;width:75.2px;overflow:hidden;font-size:9.7px;color:#111;letter-spacing:-0.22px">Erfasst von</div><div class="a" style="left:496.0px;top:226px;width:1px;height:64px;background:#e6e6e6"></div><div class="t" style="left:577.2px;top:227.5px;width:75.1px;overflow:hidden;font-size:9.7px;color:#111;letter-spacing:-0.22px">LV</div><div class="a" style="left:574.2px;top:226px;width:1px;height:64px;background:#e6e6e6"></div><div class="t" style="left:655.3px;top:227.5px;width:75.4px;overflow:hidden;font-size:9.7px;color:#111;letter-spacing:-0.22px">Lokalität</div><div class="a" style="left:652.3px;top:226px;width:1px;height:64px;background:#e6e6e6"></div><div class="t" style="left:733.7px;top:227.5px;width:75.1px;overflow:hidden;font-size:9.7px;color:#111;letter-spacing:-0.22px">Auftragnehmer</div><div class="a" style="left:730.7px;top:226px;width:1px;height:64px;background:#e6e6e6"></div><div class="t" style="left:811.8px;top:227.5px;width:88.5px;overflow:hidden;font-size:9.7px;color:#111;letter-spacing:-0.22px">Zusammenfassung</div><div class="a" style="left:808.8px;top:226px;width:1px;height:64px;background:#e6e6e6"></div><div class="t" style="left:903.3px;top:227.5px;width:75.4px;overflow:hidden;font-size:9.7px;color:#111;letter-spacing:-0.22px">Langtext</div><div class="a" style="left:900.3px;top:226px;width:1px;height:64px;background:#e6e6e6"></div><div class="t" style="left:981.7px;top:227.5px;width:75.1px;overflow:hidden;font-size:9.7px;color:#111;letter-spacing:-0.22px">Einbehalt</div><div class="a" style="left:978.7px;top:226px;width:1px;height:64px;background:#e6e6e6"></div><div class="t" style="left:1059.8px;top:227.5px;width:93.0px;overflow:hidden;font-size:9.7px;color:#111;letter-spacing:-0.22px">Auswahl Brutto/Netto</div><div class="a" style="left:1056.8px;top:226px;width:1px;height:64px;background:#e6e6e6"></div><div class="t" style="left:1155.8px;top:227.5px;width:12.7px;overflow:hidden;font-size:9.7px;color:#111;letter-spacing:-0.22px">Frist</div><div class="a" style="left:1152.8px;top:226px;width:1px;height:64px;background:#e6e6e6"></div>
<div class="a" style="left:419px;top:256.5px;width:750px;height:1px;background:#e3e3e3"></div><div class="a" style="left:419px;top:272.5px;width:750px;height:1px;background:#e3e3e3"></div><div class="a" style="left:419px;top:274px;width:750px;height:16px;background:#0078d7"></div>
<div class="t n" style="left:421.5px;top:243.0px;width:76.0px;overflow:hidden;font-size:9.7px;color:#111">29.09.2025</div><div class="t" style="left:499.0px;top:243.0px;width:76.7px;overflow:hidden;font-size:9.7px;color:#111;letter-spacing:-0.22px">KKR</div><div class="t" style="left:577.2px;top:243.0px;width:76.6px;overflow:hidden;font-size:9.7px;color:#111;letter-spacing:-0.22px">03 Rohbauarbeiten</div><div class="t" style="left:655.3px;top:243.0px;width:76.9px;overflow:hidden;font-size:9.7px;color:#111;letter-spacing:-0.22px">01.02.02 Erdgeschoss</div><div class="t" style="left:733.7px;top:243.0px;width:76.6px;overflow:hidden;font-size:9.7px;color:#111;letter-spacing:-0.22px">mm@mustermann.de</div><div class="t" style="left:811.8px;top:243.0px;width:90.0px;overflow:hidden;font-size:9.7px;color:#111;letter-spacing:-0.22px">Müll entsorgen</div><div class="t" style="left:903.3px;top:243.0px;width:76.9px;overflow:hidden;font-size:9.7px;color:#111;letter-spacing:-0.22px">Müll entsorgen</div><div class="t n" style="left:981.7px;top:243.0px;width:76.6px;overflow:hidden;font-size:9.7px;color:#111">500,00</div><div class="t" style="left:1059.8px;top:243.0px;width:94.5px;overflow:hidden;font-size:9.7px;color:#111;letter-spacing:-0.22px">*Brutto</div><div class="t n" style="left:1155.8px;top:243.0px;width:14.2px;overflow:hidden;font-size:9.7px;color:#111">31.10.2025</div>
<div class="t n" style="left:421.5px;top:259.2px;width:76.0px;overflow:hidden;font-size:9.7px;color:#111">29.09.2025</div><div class="t" style="left:499.0px;top:259.2px;width:76.7px;overflow:hidden;font-size:9.7px;color:#111;letter-spacing:-0.22px">KKR</div><div class="t" style="left:577.2px;top:259.2px;width:76.6px;overflow:hidden;font-size:9.7px;color:#111;letter-spacing:-0.22px">03 Rohbauarbeiten</div><div class="t n" style="left:655.3px;top:259.2px;width:76.9px;overflow:hidden;font-size:9.7px;color:#111">01.01.01.01.03.001</div><div class="t" style="left:733.7px;top:259.2px;width:76.6px;overflow:hidden;font-size:9.7px;color:#111;letter-spacing:-0.22px">mm@mustermann.de</div><div class="t" style="left:811.8px;top:259.2px;width:90.0px;overflow:hidden;font-size:9.7px;color:#111;letter-spacing:-0.22px">Platzierung Wandschalter</div><div class="t" style="left:903.3px;top:259.2px;width:76.9px;overflow:hidden;font-size:9.7px;color:#111;letter-spacing:-0.22px">Die Platzierung</div><div class="t n" style="left:981.7px;top:259.2px;width:76.6px;overflow:hidden;font-size:9.7px;color:#111">1.500,00</div><div class="t" style="left:1059.8px;top:259.2px;width:94.5px;overflow:hidden;font-size:9.7px;color:#111;letter-spacing:-0.22px">*Brutto</div><div class="t n" style="left:1155.8px;top:259.2px;width:14.2px;overflow:hidden;font-size:9.7px;color:#111">03.11.2025</div>
<div class="t n" style="left:421.5px;top:275.4px;width:76.0px;overflow:hidden;font-size:9.7px;color:#fff">29.09.2025</div><div class="t" style="left:499.0px;top:275.4px;width:76.7px;overflow:hidden;font-size:9.7px;color:#fff;letter-spacing:-0.22px">KKR</div><div class="t" style="left:577.2px;top:275.4px;width:76.6px;overflow:hidden;font-size:9.7px;color:#fff;letter-spacing:-0.22px">03 Rohbauarbeiten</div><div class="t n" style="left:655.3px;top:275.4px;width:76.9px;overflow:hidden;font-size:9.7px;color:#fff">01.01.04.01.01.001</div><div class="t" style="left:733.7px;top:275.4px;width:76.6px;overflow:hidden;font-size:9.7px;color:#fff;letter-spacing:-0.22px">mm@mustermann.de</div><div class="t" style="left:811.8px;top:275.4px;width:90.0px;overflow:hidden;font-size:9.7px;color:#fff;letter-spacing:-0.22px">Aussparung Tür herstellen</div><div class="t" style="left:903.3px;top:275.4px;width:76.9px;overflow:hidden;font-size:9.7px;color:#fff;letter-spacing:-0.22px">In der Wand</div><div class="t n" style="left:981.7px;top:275.4px;width:76.6px;overflow:hidden;font-size:9.7px;color:#fff">2.500,00</div><div class="t" style="left:1059.8px;top:275.4px;width:94.5px;overflow:hidden;font-size:9.7px;color:#fff;letter-spacing:-0.22px">*Brutto</div><div class="t n" style="left:1155.8px;top:275.4px;width:14.2px;overflow:hidden;font-size:9.7px;color:#fff">16.10.2025</div>
<div class="a" style="left:496.0px;top:274px;width:1px;height:16px;background:#5a9be0"></div><div class="a" style="left:574.2px;top:274px;width:1px;height:16px;background:#5a9be0"></div><div class="a" style="left:652.3px;top:274px;width:1px;height:16px;background:#5a9be0"></div><div class="a" style="left:730.7px;top:274px;width:1px;height:16px;background:#5a9be0"></div><div class="a" style="left:808.8px;top:274px;width:1px;height:16px;background:#5a9be0"></div><div class="a" style="left:900.3px;top:274px;width:1px;height:16px;background:#5a9be0"></div><div class="a" style="left:978.7px;top:274px;width:1px;height:16px;background:#5a9be0"></div><div class="a" style="left:1056.8px;top:274px;width:1px;height:16px;background:#5a9be0"></div><div class="a" style="left:1152.8px;top:274px;width:1px;height:16px;background:#5a9be0"></div>
<div class="a" style="left:418px;top:290px;width:751px;height:278.5px;background:#f0f0f0;border-bottom:1px solid #dcdcdc"></div>
<div class="a" style="left:409px;top:420px;width:3.5px;height:3.5px;border-radius:50%;background:#111"></div>
<div class="t" style="left:438.7px;top:308.0px;font-size:9.6px;color:#111;letter-spacing:-0.22px">Erfasst am</div><div class="a" style="left:520.6px;top:304.8px;width:64.0px;height:16.9px;background:#fff;border:1px solid #a6a6a6;border:2px solid #b4b4b4;box-shadow:inset 0 0 0 1px #6e6e6e"></div><div class="t n" style="left:523.1px;top:306.8px;font-size:9.6px;color:#111">29.09.2025</div><div class="t" style="left:593px;top:308.0px;font-size:9.6px;color:#111;letter-spacing:-0.22px">Erfasst von</div><div class="a" style="left:687.7px;top:304.8px;width:91.7px;height:16.9px;background:#fff;border:1px solid #a6a6a6;"></div><div class="t" style="left:690.2px;top:306.8px;font-size:9.6px;color:#111;letter-spacing:-0.22px">KKR</div><div class="t" style="left:787.9px;top:308.0px;font-size:9.6px;color:#111;letter-spacing:-0.22px">Auswahl Status</div><div class="a" style="left:854px;top:305px;width:80.6px;height:16.7px;background:#fff;border:1px solid #a6a6a6;"></div><div class="t" style="left:856.5px;top:306.9px;font-size:9.6px;color:#111;letter-spacing:-0.22px">*neu</div>
<div class="t" style="left:438.7px;top:332.0px;font-size:9.6px;color:#111;letter-spacing:-0.22px">Frist</div><div class="a" style="left:520.6px;top:329px;width:64.0px;height:17.3px;background:#fff;border:1px solid #a6a6a6;"></div><div class="t n" style="left:523.1px;top:331.1px;font-size:9.6px;color:#111">16.10.2025</div><div class="t" style="left:593px;top:332.0px;font-size:9.6px;color:#111;letter-spacing:-0.22px">Auftragnehmer</div><div class="a" style="left:687.7px;top:329px;width:246.9px;height:17.3px;background:#fff;border:1px solid #a6a6a6;"></div><div class="t" style="left:690.2px;top:331.1px;font-size:9.6px;color:#111;letter-spacing:-0.22px">mm@mustermann.de</div>
<div class="t" style="left:438.7px;top:356.0px;font-size:9.6px;color:#111;letter-spacing:-0.22px">Zusammenfassung</div><div class="a" style="left:520.6px;top:353.7px;width:414.0px;height:16.3px;background:#fff;border:1px solid #a6a6a6;"></div><div class="t" style="left:523.1px;top:355.4px;font-size:9.6px;color:#111;letter-spacing:-0.22px">Aussparung Tür herstellen</div>
<div class="t" style="left:438.7px;top:406.0px;font-size:9.6px;color:#111;letter-spacing:-0.22px">Langtext</div><div class="a" style="left:520.6px;top:377px;width:414.0px;height:68.4px;background:#fff;border:1px solid #a6a6a6;"></div><div class="a" style="left:523px;top:378.5px;width:400px;font-size:9.2px;line-height:12.5px;color:#111">In der Wand wurde die Aussparung der Tür vergessen. Nun muss sie nachträglich hergestellt<br>werden.</div>
<div class="t" style="left:438.7px;top:456.0px;font-size:9.6px;color:#111;letter-spacing:-0.22px">LV</div><div class="a" style="left:520.6px;top:453px;width:414.0px;height:17.0px;background:#fff;border:1px solid #a6a6a6;"></div><div class="t" style="left:523.1px;top:455.0px;font-size:9.6px;color:#111;letter-spacing:-0.22px">03 Rohbauarbeiten</div>
<div class="t" style="left:438.7px;top:480.0px;font-size:9.6px;color:#111;letter-spacing:-0.22px">Lokalität</div><div class="a" style="left:520.6px;top:477px;width:414.0px;height:17.0px;background:#fff;border:1px solid #a6a6a6;"></div><div class="t" style="left:523.1px;top:479.0px;font-size:9.6px;color:#111;letter-spacing:-0.22px">01.01.04.01.01.001 Blockrahmentür 1-Fl 25</div>
<div class="t" style="left:438.7px;top:504.0px;font-size:9.6px;color:#111;letter-spacing:-0.22px">Einbehalt</div><div class="a" style="left:520.6px;top:501.4px;width:64.0px;height:16.9px;background:#fff;border:1px solid #a6a6a6;"></div><div class="t n" style="left:523.1px;top:503.3px;font-size:9.6px;color:#111">2.500,00</div><div class="t" style="left:593px;top:504.0px;font-size:9.6px;color:#111;letter-spacing:-0.22px">Auswahl Brutto/Netto</div><div class="a" style="left:687.7px;top:501.4px;width:93.3px;height:16.9px;background:#fff;border:1px solid #a6a6a6;"></div><div class="t" style="left:690.2px;top:503.3px;font-size:9.6px;color:#111;letter-spacing:-0.22px">*Brutto</div><div class="t" style="left:790px;top:504.0px;font-size:9.6px;color:#111;letter-spacing:-0.22px">Auswahl Art</div><div class="a" style="left:842.9px;top:501.4px;width:91.7px;height:16.9px;background:#fff;border:1px solid #a6a6a6;"></div><div class="t" style="left:845.4px;top:503.3px;font-size:9.6px;color:#111;letter-spacing:-0.22px">*Sonstige</div>
<div class="a" style="left:434px;top:534px;width:720px;height:1px;background:#a0a0a0"></div>
<div class="a" style="left:1025px;top:543.6px;width:58.6px;height:16px;background:#cccccc;border:1px solid #bdbdbd"></div>
<div class="t" style="left:1025px;top:545.5px;width:58.6px;text-align:center;font-size:9.6px;color:#8d8d8d;letter-spacing:-0.22px">Übernehmen</div>
<div class="a" style="left:1097px;top:543.6px;width:58px;height:16px;background:#e1e1e1;border:1px solid #adadad"></div>
<div class="t" style="left:1097px;top:545.5px;width:58px;text-align:center;font-size:9.6px;color:#111;letter-spacing:-0.22px">Abbruch</div>

<div class="a" style="left:403px;top:671px;width:766px;height:44.5px;background:#f0f0f0"></div>
<div class="a" style="left:407px;top:680px;width:11.5px;height:11.5px;background:#c4c4c4;color:#eee;font-size:9px;line-height:11px;text-align:center">×</div>
<div class="a" style="left:422.5px;top:680px;width:11px;height:11.5px;background:#fafafa;border:1px solid #d6d6d6"></div>
<svg class="a" style="left:424px;top:682px" width="9" height="8" viewBox="0 0 9 8"><path d="M1 4 L3.5 6.5 L8 1" stroke="#c0c0c0" fill="none" stroke-width="1"/></svg>
<div class="t" style="left:439.7px;top:680.5px;font-size:9.6px;color:#111;letter-spacing:-0.22px">(LV = 03 Rohbauarbeiten)</div>
<div class="a" style="left:1108.8px;top:675.5px;width:56px;height:21px;background:#cccccc;border:1px solid #c3c3c3"></div>
<div class="t" style="left:1108.8px;top:680px;width:56px;text-align:center;font-size:9.6px;color:#8a8a8a;letter-spacing:-0.22px">Anpassen...</div>
<div class="a" style="left:445px;top:701px;width:33px;height:13.5px;background:#fff"></div><div class="t" style="left:445px;top:701.5px;width:33px;text-align:center;font-size:9.6px;color:#111;letter-spacing:-0.22px">3 of 3</div>
<div class="a" style="left:445px;top:701px;width:33px;height:13.5px;background:#fff"></div><div class="t n" style="left:445px;top:701.5px;width:33px;text-align:center;font-size:9.6px;color:#111">3 of 3</div>
<div class="a" style="left:403px;top:701px;width:13px;height:13.5px;background:#e6e6e6;border:1px solid #dadada"></div><svg class="a" style="left:403px;top:701px" width="13" height="13" viewBox="0 0 13 13"><path d="M3 4.5v4.5" stroke="#333" stroke-width="1"/><path d="M6.5 4.5 L4 6.75 L6.5 9Z M9.5 4.5 L7 6.75 L9.5 9Z" fill="#333"/></svg><div class="a" style="left:418px;top:701px;width:12px;height:13.5px;background:#e6e6e6;border:1px solid #dadada"></div><svg class="a" style="left:418px;top:701px" width="13" height="13" viewBox="0 0 13 13"><path d="M6 4.5 L3.5 6.75 L6 9Z M9 4.5 L6.5 6.75 L9 9Z" fill="#333"/></svg><div class="a" style="left:432px;top:701px;width:12px;height:13.5px;background:#e6e6e6;border:1px solid #dadada"></div><svg class="a" style="left:432px;top:701px" width="13" height="13" viewBox="0 0 13 13"><path d="M7.5 4.5 L5 6.75 L7.5 9Z" fill="#333"/></svg><div class="a" style="left:478px;top:701px;width:13px;height:13.5px;background:#d4d4d4;border:1px solid #dadada"></div><svg class="a" style="left:478px;top:701px" width="13" height="13" viewBox="0 0 13 13"><path d="M5.5 4.5 L8 6.75 L5.5 9Z" fill="#444"/></svg><div class="a" style="left:492px;top:701px;width:12px;height:13.5px;background:#d4d4d4;border:1px solid #dadada"></div><svg class="a" style="left:492px;top:701px" width="13" height="13" viewBox="0 0 13 13"><path d="M3.5 4.5 L6 6.75 L3.5 9Z M6.5 4.5 L9 6.75 L6.5 9Z" fill="#444"/></svg><div class="a" style="left:506px;top:701px;width:13px;height:13.5px;background:#d4d4d4;border:1px solid #dadada"></div><svg class="a" style="left:506px;top:701px" width="13" height="13" viewBox="0 0 13 13"><path d="M2.5 4.5 L5 6.75 L2.5 9Z M5.5 4.5 L8 6.75 L5.5 9Z" fill="#444"/><path d="M9.5 4.5v4.5" stroke="#444" stroke-width="1"/></svg><div class="a" style="left:521px;top:701px;width:12px;height:13.5px;background:#d4d4d4;border:1px solid #dadada"></div><svg class="a" style="left:521px;top:701px" width="13" height="13" viewBox="0 0 13 13"><path d="M6 3.5v6.5M3 6.5h6" stroke="#a0a0a0" stroke-width="1.3"/><path d="M8 8.5h2.5v2.5" stroke="#a0a0a0" stroke-width="0.8" fill="none"/></svg><div class="a" style="left:535px;top:701px;width:12px;height:13.5px;background:#d4d4d4;border:1px solid #dadada"></div><svg class="a" style="left:535px;top:701px" width="13" height="13" viewBox="0 0 13 13"><path d="M3.5 6.75h6" stroke="#d0303a" stroke-width="1.8"/></svg><div class="a" style="left:549px;top:701px;width:12px;height:13.5px;background:#d4d4d4;border:1px solid #dadada"></div><svg class="a" style="left:549px;top:701px" width="13" height="13" viewBox="0 0 13 13"><path d="M3.5 7 L5.5 9.5 L9.5 4" stroke="#a8a8a8" stroke-width="1.2" fill="none"/></svg><div class="a" style="left:563px;top:701px;width:12px;height:13.5px;background:#d4d4d4;border:1px solid #dadada"></div><svg class="a" style="left:563px;top:701px" width="13" height="13" viewBox="0 0 13 13"><path d="M4.5 4.5 L8.5 8.5 M8.5 4.5 L4.5 8.5" stroke="#9a9a9a" stroke-width="1.1"/></svg><div class="a" style="left:577px;top:701px;width:12px;height:13.5px;background:#e4e4e4;border:1px solid #dadada"></div><svg class="a" style="left:577px;top:701px" width="13" height="13" viewBox="0 0 13 13"><path d="M3.5 10.5 Q3.5 5.8 8.5 5.8" stroke="#111" stroke-width="1.8" fill="none"/><path d="M8 3 L11 5.8 L8 8.6Z" fill="#111"/></svg>


<!-- toolbar icons -->
<div class="a" style="left:5px;top:24px;width:0;height:14px;border-left:1.2px dotted #b8b8b8"></div>
<div class="a" style="left:5.5px;top:43px;width:0;height:34px;border-left:1.2px dotted #b8b8b8"></div>
<div class="a" style="left:94.5px;top:43px;width:0;height:34px;border-left:1.2px dotted #b8b8b8"></div>
<div class="a" style="left:195.5px;top:43px;width:0;height:34px;border-left:1.2px dotted #b8b8b8"></div>
<div class="a" style="left:383.5px;top:43px;width:0;height:34px;border-left:1.2px dotted #b8b8b8"></div>
<div class="a" style="left:485.5px;top:43px;width:0;height:34px;border-left:1.2px dotted #b8b8b8"></div>
<div class="a" style="left:254px;top:44px;width:1px;height:33px;background:#b5b5b5"></div>
<div class="a" style="left:324px;top:44px;width:1px;height:33px;background:#b5b5b5"></div>
<svg class="a" style="left:34px;top:43px" width="21" height="21" viewBox="0 0 21 21">
 <path d="M1.5 7 V18.5 H16 V7 H8 L6.5 5 H1.5Z" fill="#e8eef6" stroke="#4a5a70" stroke-width="0.9"/>
 <path d="M2 19 L4.5 10 H19.5 L16.5 19Z" fill="#3f6db5" stroke="#2a4a80" stroke-width="0.9"/>
 <path d="M11 6 Q13 1.5 17.5 2.5" stroke="#333" stroke-width="1.1" fill="none"/>
 <path d="M16 0.5 L19.5 3 L16 5Z" fill="#333"/>
</svg>
<svg class="a" style="left:129px;top:43px" width="22" height="21" viewBox="0 0 22 21">
 <path d="M1 1 H9 L12 4 V17 H1Z" fill="#f2b5b5" stroke="#c03a3a" stroke-width="0.9"/>
 <rect x="3" y="3.5" width="3" height="6" fill="#5a9a4a"/>
 <rect x="8" y="9" width="12" height="8" rx="1.5" fill="#8ea0b8" stroke="#3a4a60" stroke-width="0.9"/>
 <rect x="10" y="6.5" width="8" height="3" fill="#fff" stroke="#3a4a60" stroke-width="0.8"/>
 <rect x="10.5" y="14" width="7" height="5.5" fill="#fff" stroke="#3a4a60" stroke-width="0.8"/>
</svg>
<svg class="a" style="left:203px;top:50px" width="19" height="19" viewBox="0 0 19 19">
 <path d="M4.5 8.5 A5.8 5.8 0 1 1 10.5 16.5" stroke="#a9a9a9" stroke-width="3" fill="none"/>
 <path d="M0 5.5 L9 5.5 L4 11.5Z" fill="#a9a9a9"/>
</svg>
<svg class="a" style="left:230px;top:50px" width="19" height="19" viewBox="0 0 19 19">
 <path d="M14.5 8.5 A5.8 5.8 0 1 0 8.5 16.5" stroke="#a9a9a9" stroke-width="3" fill="none"/>
 <path d="M19 5.5 L10 5.5 L15 11.5Z" fill="#a9a9a9"/>
</svg>
<svg class="a" style="left:279px;top:43px" width="20" height="21" viewBox="0 0 20 21">
 <path d="M1 1.5 H9.5 V19.5 H1 M1 7.3 H5 M1 14.5 H5" stroke="#8a8a8a" stroke-width="1" fill="none"/>
 <rect x="5" y="7.3" width="8.5" height="6.5" fill="#d4d4d4" stroke="#8f8f8f" stroke-width="0.9"/>
 <path d="M14 9 L16.5 10.5 L14 12Z" fill="#8a8a8a"/>
</svg>
<svg class="a" style="left:338px;top:44px" width="20" height="20" viewBox="0 0 20 20">
 <path d="M3 3 L5.5 1 L7.5 3 V7 L9 10 V19 H1 V10 L3 7Z" fill="#e4e4e4" stroke="#9a9a9a" stroke-width="0.9"/>
 <path d="M12.5 3 L14.5 1 L17 3 V7 L19 10 V19 H11 V10 L12.5 7Z" fill="#e4e4e4" stroke="#9a9a9a" stroke-width="0.9"/>
 <path d="M9 12 H11" stroke="#9a9a9a" stroke-width="1.2"/>
</svg>
<svg class="a" style="left:418px;top:43px" width="22" height="21" viewBox="0 0 22 21">
 <path d="M6 2.5 H15 L19.5 7 V20.5 H6Z" fill="#fff" stroke="#b83a3a" stroke-width="1"/>
 <path d="M15 2.5 V7 H19.5" fill="#fff" stroke="#b83a3a" stroke-width="0.8"/>
 <text x="7.3" y="18.5" font-size="13" font-weight="bold" fill="#4cae3a" font-family="Liberation Sans">€</text>
 <path d="M0.5 4.5 H7" stroke="#1f3f8a" stroke-width="2"/>
 <path d="M6 1.5 L9.5 4.5 L6 7.5Z" fill="#1f3f8a"/>
</svg>
<svg class="a" style="left:81.3px;top:71.5px" width="6" height="4" viewBox="0 0 6 4"><path d="M0.5 0.5 H5.5 L3 3.5Z" fill="#111"/></svg><svg class="a" style="left:183.3px;top:71.5px" width="6" height="4" viewBox="0 0 6 4"><path d="M0.5 0.5 H5.5 L3 3.5Z" fill="#111"/></svg><svg class="a" style="left:370.8px;top:71.5px" width="6" height="4" viewBox="0 0 6 4"><path d="M0.5 0.5 H5.5 L3 3.5Z" fill="#111"/></svg><svg class="a" style="left:472.3px;top:71.5px" width="6" height="4" viewBox="0 0 6 4"><path d="M0.5 0.5 H5.5 L3 3.5Z" fill="#111"/></svg><svg class="a" style="left:520.4px;top:71.5px" width="6" height="4" viewBox="0 0 6 4"><path d="M0.5 0.5 H5.5 L3 3.5Z" fill="#111"/></svg><svg class="a" style="left:1494.5px;top:32.5px" width="6" height="4" viewBox="0 0 6 4"><path d="M0.5 0.5 H5.5 L3 3.5Z" fill="#111"/></svg>

<!-- status bar -->
<div class="a" style="left:2px;top:797px;width:1498px;height:16px;background:#f0f0f0;border-top:1.5px solid #d8e2ec"></div>
<div class="a" style="left:55.5px;top:799px;width:1px;height:14px;background:#d6d6d6"></div>
<div class="a" style="left:107px;top:799px;width:1px;height:14px;background:#d6d6d6"></div>
<div class="a" style="left:196.5px;top:799px;width:1px;height:14px;background:#d6d6d6"></div>
<div class="a" style="left:901px;top:799px;width:1px;height:14px;background:#d6d6d6"></div>
<div class="a" style="left:915.5px;top:799px;width:1px;height:14px;background:#d6d6d6"></div>
<svg class="a" style="left:4px;top:800px" width="12" height="13" viewBox="0 0 12 13"><circle cx="5.5" cy="3.5" r="2.6" fill="#c8905a"/><path d="M3 2 Q5.5 -0.5 8 2" fill="#333"/><path d="M1 13 V9 Q1 6.5 5.5 6.5 Q10 6.5 10 9 V13Z" fill="#7a7a7a"/><path d="M5 7 L5.5 11 L6 7" fill="#fff"/></svg>
<div class="a" style="left:200px;top:801.5px;width:13.5px;height:11.5px;background:#f6f0fa;border:1px solid #8c8c8c"></div>
<svg class="a" style="left:201px;top:802px" width="12" height="11" viewBox="0 0 12 11"><circle cx="6" cy="5.5" r="4.5" fill="#fff" stroke="#8a3fb0" stroke-width="1.1"/><path d="M6 4.5 V8.2" stroke="#8a3fb0" stroke-width="1.3"/><circle cx="6" cy="2.9" r="0.7" fill="#8a3fb0"/></svg>
<div class="t" style="left:66px;top:801px">DE | EN</div>
<div class="t" style="left:127px;top:801px">Zeile 1 von 0</div>

</body></html>
